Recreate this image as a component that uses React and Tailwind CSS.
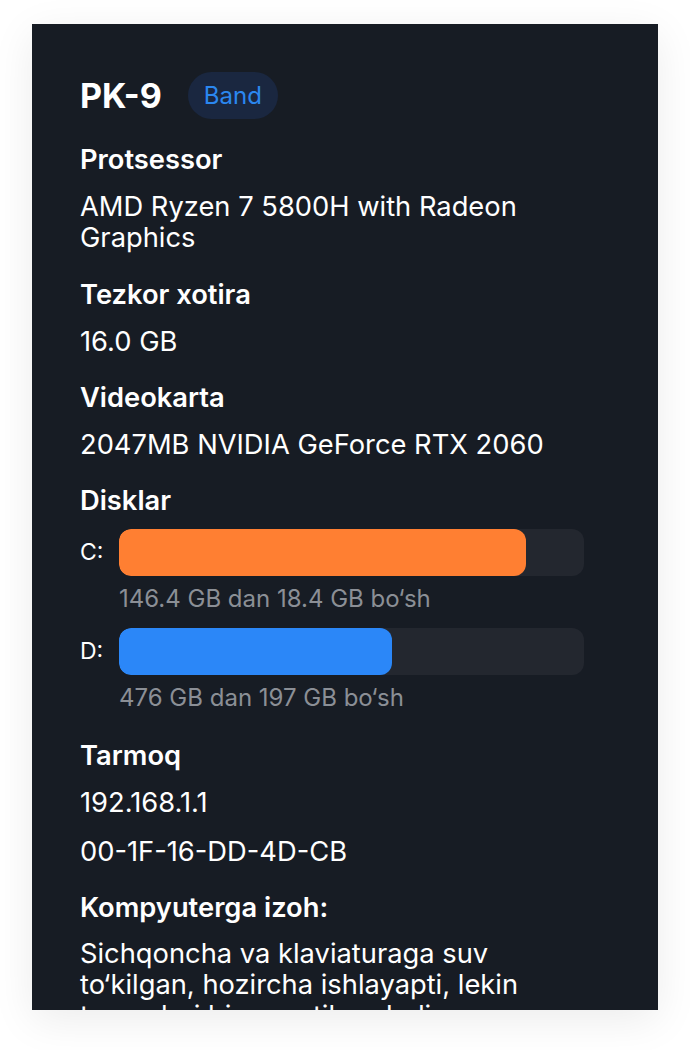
import React from 'react';

const disks = [
  { name: 'C:', total: 146.4, free: 18.4, color: 'bg-[#ff7f32]', caption: '146.4 GB dan 18.4 GB bo‘sh' },
  { name: 'D:', total: 476, free: 197, color: 'bg-[#2b87f8]', caption: '476 GB dan 197 GB bo‘sh' },
];

const Heading = ({ children, className = '' }) => (
  <h3 className={`text-[27.3px] leading-[31px] font-semibold text-white ${className}`}>{children}</h3>
);

const Value = ({ children, className = '' }) => (
  <p className={`text-[27.3px] leading-[31px] text-white ${className}`}>{children}</p>
);

export default function App() {
  return (
    <div className="min-h-screen bg-white pt-6 px-8 font-['Inter',sans-serif]">
      <div className="h-[986px] overflow-hidden bg-[#171c24] pl-12 pr-[74px] pt-12 shadow-[0_10px_40px_rgba(0,0,0,0.08)]">
        {/* Title */}
        <div className="flex items-center gap-[26px] h-[47px]">
          <h2 className="text-[34px] font-bold text-white leading-none">PK-9</h2>
          <span className="h-[47px] px-[16px] flex items-center rounded-full bg-[#1a2740] text-[#2b87f0] text-[24px]">Band</span>
        </div>

        <Heading className="mt-[25px]">Protsessor</Heading>
        <Value className="mt-[16px]">AMD Ryzen 7 5800H with Radeon Graphics</Value>

        <Heading className="mt-[26px]">Tezkor xotira</Heading>
        <Value className="mt-[16px]">16.0 GB</Value>

        <Heading className="mt-[25px]">Videokarta</Heading>
        <Value className="mt-[16px]">2047MB NVIDIA GeForce RTX 2060</Value>

        <Heading className="mt-[25px]">Disklar</Heading>
        <div className="mt-[13px] flex flex-col gap-[17px]">
          {disks.map((d) => {
            const used = ((d.total - d.free) / d.total) * 100;
            return (
              <div key={d.name}>
                <div className="flex items-center">
                  <span className="w-[39px] text-[23px] text-white">{d.name}</span>
                  <div className="flex-1 h-[47px] rounded-[12px] bg-[#23272f] overflow-hidden">
                    <div className={`h-full rounded-[12px] ${d.color}`} style={{ width: `${used}%` }} />
                  </div>
                </div>
                <p className="mt-[11px] pl-[39px] text-[24px] leading-[24px] text-[#8b8f96]">{d.caption}</p>
              </div>
            );
          })}
        </div>

        <Heading className="mt-[30px]">Tarmoq</Heading>
        <Value className="mt-[16px]">192.168.1.1</Value>
        <Value className="mt-[18px]">00-1F-16-DD-4D-CB</Value>

        <Heading className="mt-[25px]">Kompyuterga izoh:</Heading>
        <Value className="mt-[15px]">
          Sichqoncha va klaviaturaga suv to‘kilgan, hozircha ishlayapti, lekin tugmalari biroz qotib qoladi
        </Value>
      </div>
    </div>
  );
}
